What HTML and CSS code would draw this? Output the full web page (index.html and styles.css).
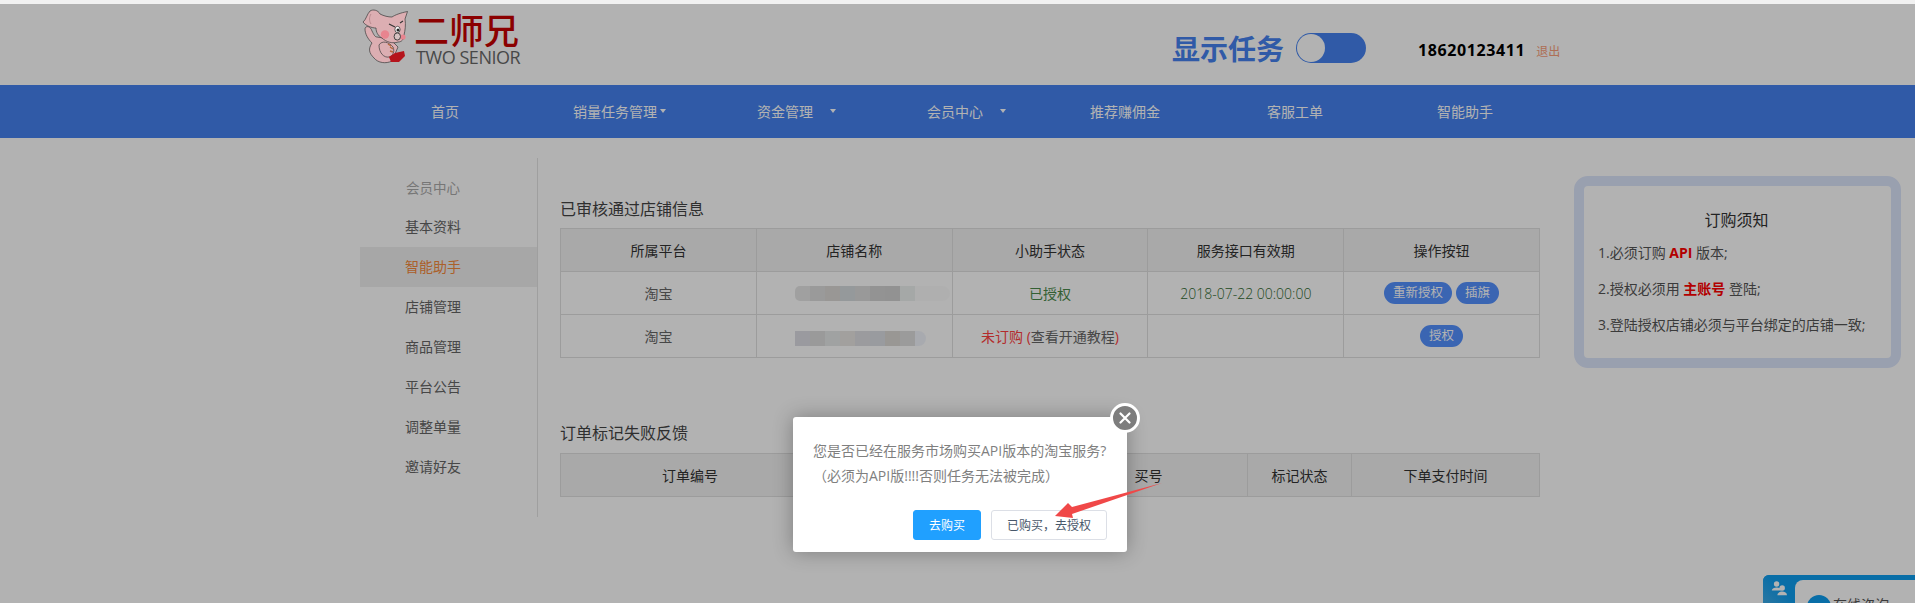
FILE: index.html
```html
<!DOCTYPE html>
<html lang="zh-CN">
<head>
  <meta charset="UTF-8">
  <title>二师兄 - 智能助手</title>
  <link rel="stylesheet" href="styles.css">
</head>
<body>
  <div class="top-strip"></div>
  <div class="page">
    <header class="header">
      <div class="logo">
        <svg class="logo-pig" viewBox="0 0 46 56" width="46" height="56">
          <!-- 身体 -->
          <path d="M3 20 C3 17 8 16 10 22 C12 26 13 28 15 28 L28 30 L36 38 L30 52 C24 55 16 54 12 49 C7 44 6 40 10 34 C6 30 3 25 3 20 Z" fill="#dcaeb2" stroke="#3a3a3a" stroke-width="0.7"/>
          <!-- 头和耳朵 -->
          <path d="M1 13 C4 11 5 5 8 2 C11 0 16 1 18 5 C22 7 26 8 30 8 C33 6 38 4 45.5 2.5 L43 10 C44 16 43 22 42 26 C42 30 40 33 36 33 C31 35 24 33 20 29 C16 27 14 23 14 19 C10 19 4 17 1 13 Z" fill="#dcaeb2" stroke="#3a3a3a" stroke-width="0.7"/>
          <path d="M9 5 C7 8 7 12 9 15" fill="none" stroke="#b98a8e" stroke-width="1"/>
          <circle cx="23" cy="25.5" r="4.2" fill="#e8848f"/>
          <circle cx="41" cy="28" r="2.6" fill="#e8848f"/>
          <path d="M27 15 L33 18 M38 14 L41 12" stroke="#333" stroke-width="1.1" fill="none"/>
          <ellipse cx="35.5" cy="20.5" rx="2.6" ry="3.2" fill="#fff" stroke="#222" stroke-width="0.7"/>
          <circle cx="36" cy="21" r="1.5" fill="#222"/>
          <ellipse cx="35.3" cy="27.5" rx="3.2" ry="3.6" fill="#d6c2c2" stroke="#333" stroke-width="0.9"/>
          <!-- 手和红包 -->
          <path d="M17 36 C20 31 27 33 31 38 C33 42 31 47 27 48 C22 49 17 44 17 36 Z" fill="#dcaeb2" stroke="#3a3a3a" stroke-width="0.7"/>
          <path d="M26 35 L29 37 M28 38 L31 40 M28 42 L31 43" stroke="#b5683c" stroke-width="1.4"/>
          <path d="M27 48 L33 44 L42 42 L43 47 L37 53 L29 53 Z" fill="#b5141c"/>
        </svg>
        <div class="logo-text">
          <div class="logo-cn">二师兄</div>
          <div class="logo-en">TWO SENIOR</div>
        </div>
      </div>
      <div class="header-right">
        <span class="task-label">显示任务</span>
        <div class="toggle"><span class="knob"></span></div>
        <span class="phone">18620123411</span>
        <a class="logout">退出</a>
      </div>
    </header>

    <nav class="nav">
      <a class="nav-item">首页</a>
      <a class="nav-item">销量任务管理<i class="caret"></i></a>
      <a class="nav-item">资金管理<i class="caret"></i></a>
      <a class="nav-item">会员中心<i class="caret"></i></a>
      <a class="nav-item">推荐赚佣金</a>
      <a class="nav-item">客服工单</a>
      <a class="nav-item">智能助手</a>
    </nav>

    <main class="content">
      <aside class="side">
        <div class="side-title">会员中心</div>
        <a class="side-item">基本资料</a>
        <a class="side-item active">智能助手</a>
        <a class="side-item">店铺管理</a>
        <a class="side-item">商品管理</a>
        <a class="side-item">平台公告</a>
        <a class="side-item">调整单量</a>
        <a class="side-item">邀请好友</a>
      </aside>

      <section class="main">
        <h3 class="block-title first">已审核通过店铺信息</h3>
        <table class="grid shops">
          <tr><th>所属平台</th><th>店铺名称</th><th>小助手状态</th><th>服务接口有效期</th><th>操作按钮</th></tr>
          <tr>
            <td>淘宝</td>
            <td><div class="blur blur-one"></div></td>
            <td class="green">已授权</td>
            <td class="green date">2018-07-22 00:00:00</td>
            <td><a class="pill">重新授权</a><a class="pill">插旗</a></td>
          </tr>
          <tr>
            <td>淘宝</td>
            <td><div class="blur blur-two"></div></td>
            <td><span class="red">未订购</span> <span class="red">(</span>查看开通教程<span class="red">)</span></td>
            <td></td>
            <td><a class="pill">授权</a></td>
          </tr>
        </table>

        <h3 class="block-title second">订单标记失败反馈</h3>
        <table class="grid orders">
          <colgroup><col class="c1"><col class="c2"><col class="c3"><col class="c4"><col class="c5"></colgroup>
          <tr><th>订单编号</th><th></th><th>买号</th><th>标记状态</th><th>下单支付时间</th></tr>
        </table>
      </section>

      <aside class="notice">
        <div class="notice-inner">
          <h4>订购须知</h4>
          <p>1.必须订购 <b>API</b> 版本;</p>
          <p>2.授权必须用 <b>主账号</b> 登陆;</p>
          <p>3.登陆授权店铺必须与平台绑定的店铺一致;</p>
        </div>
      </aside>
    </main>

    <div class="chat">
      <div class="chat-tab">
        <svg viewBox="0 0 20 20" width="16" height="16"><circle cx="7" cy="5" r="3.4" fill="#fff"/><path d="M1 13 C1 8 13 8 13 13 Z" fill="#fff"/><circle cx="14" cy="10" r="3.4" fill="#fff"/><path d="M8 19 C8 13 20 13 20 19 Z" fill="#fff"/></svg>
      </div>
      <div class="chat-body">
        <svg class="chat-bubble" viewBox="0 0 24 24" width="24" height="24"><circle cx="12" cy="12" r="12" fill="#0e9ef0"/><circle cx="8" cy="9" r="1" fill="#fff"/><circle cx="12" cy="9" r="1" fill="#fff"/><circle cx="16" cy="9" r="1" fill="#fff"/></svg>
        <span>在线咨询</span>
      </div>
    </div>
  </div>

  <div class="mask"></div>

  <div class="dialog">
    <a class="dialog-close">
      <svg viewBox="0 0 12 12" width="12" height="12"><path d="M1.5 1.5 L10.5 10.5 M10.5 1.5 L1.5 10.5" stroke="#fff" stroke-width="2.2" stroke-linecap="round"/></svg>
    </a>
    <div class="dialog-text">
      <div>您是否已经在服务市场购买API版本的淘宝服务?</div>
      <div>（必须为API版!!!!否则任务无法被完成）</div>
    </div>
    <div class="dialog-btns">
      <button class="btn btn-primary">去购买</button>
      <button class="btn">已购买，去授权</button>
    </div>
  </div>

  <!-- 截图上画的红色箭头 -->
  <svg class="arrow" viewBox="0 0 110 36" width="110" height="36">
    <polygon points="0,34 13,21 17,25 107,1 17,32 18,36" fill="#f04848"/>
  </svg>
</body>
</html>
```

FILE: styles.css
```css
* { box-sizing: border-box; }
html, body {
  margin: 0;
  padding: 0;
  height: 603px;
  overflow: hidden;
}
body {
  background: #fff;
  font-family: "Open Sans", "Noto Sans CJK SC", sans-serif;
  font-size: 14px;
  color: #555;
  position: relative;
}
.top-strip { height: 4px; background: #f1f1f1; }
.page { height: 599px; position: relative; overflow: hidden; }
.mask {
  position: absolute;
  top: 4px; left: 0; right: 0; bottom: 0;
  background: rgba(0,0,0,0.3);
  z-index: 1;
}

/* 头部 */
.header {
  height: 81px;
  padding-left: 362px;
  display: flex;
  align-items: flex-start;
}
.logo { display: flex; width: 811px; padding-top: 5px; }
.logo-pig { display: block; flex: none; position: relative; z-index: 2; }
.logo-text { margin-left: 8px; position: relative; z-index: 2; }
.logo-cn {
  font-size: 35px;
  line-height: 36px;
  margin-top: 2px;
  margin-left: -2px;
  font-weight: 500;
  color: #8b0000;
  white-space: nowrap;
  font-family: "Noto Sans CJK SC", sans-serif;
}
.logo-en {
  font-size: 18px;
  line-height: 20px;
  color: #484848;
  white-space: nowrap;
  letter-spacing: -0.45px;
}
.header-right { display: flex; align-items: center; padding-top: 29px; }
.task-label {
  font-size: 28px;
  line-height: 30px;
  font-weight: 700;
  color: #4582f0;
  margin-left: -1px;
  font-family: "Noto Sans CJK SC", sans-serif;
}
.toggle {
  width: 70px;
  height: 30px;
  margin-left: 12px;
  border-radius: 15px;
  background: #4582f0;
  padding: 1px;
}
.knob {
  display: block;
  width: 28px;
  height: 28px;
  border-radius: 50%;
  background: #fff;
}
.phone {
  margin-left: 52px;
  font-size: 16px;
  font-weight: 700;
  color: #000;
  letter-spacing: 0.6px;
  padding-top: 4px;
}
.logout { margin-left: 11px; font-size: 12px; color: #f9a07a; padding-top: 6px; }

/* 导航 */
.nav {
  height: 53px;
  background: #4582f0;
  padding-left: 360px;
  display: flex;
}
.nav-item {
  width: 170px;
  text-align: center;
  line-height: 53px;
  color: #fff;
  font-size: 14px;
  position: relative;
}
.caret {
  position: absolute;
  right: 34px;
  top: 24px;
  border: 3px solid transparent;
  border-top: 4px solid #fff;
  border-bottom: 0;
}

/* 主体 */
.content {
  padding-left: 360px;
  display: flex;
  align-items: flex-start;
}
.side {
  width: 178px;
  height: 359px;
  margin-top: 20px;
  padding-top: 10px;
  border-right: 1px solid #e4e4e4;
}
.side-title {
  height: 39px;
  padding-left: 46px;
  line-height: 40px;
  color: #aaa;
  font-size: 13.5px;
}
.side-item {
  display: block;
  height: 40px;
  line-height: 40px;
  padding-left: 45px;
  color: #666;
}
.side-item.active { background: #f0f0f0; color: #f58a3c; }

.main { width: 980px; margin-left: 22px; }
.block-title {
  margin: 0;
  font-size: 16px;
  font-weight: 400;
  color: #444;
  line-height: 24px;
}
.block-title.first { margin-top: 59px; margin-bottom: 7px; }
.block-title.second { margin-top: 63px; margin-bottom: 8px; }
.grid {
  width: 100%;
  table-layout: fixed;
  border-collapse: collapse;
  border: 1px solid #e0e0e0;
}
.grid th, .grid td {
  height: 43px;
  border: 1px solid #e0e0e0;
  text-align: center;
  padding: 0;
  font-size: 14px;
  font-weight: 400;
}
.grid th { background: #f2f2f2; color: #333; }
.grid td { color: #666; }
.orders .c1 { width: 259px; }
.orders .c2 { width: 230px; }
.orders .c3 { width: 198px; }
.orders .c4 { width: 104px; }
.green { color: #4a8a4a !important; }
.date { font-weight: 300 !important; color: #2f6a2f !important; }
.red { color: #ff4040; }
.pill {
  display: inline-block;
  height: 22px;
  line-height: 22px;
  padding: 0 9px;
  margin: 0 2px;
  border-radius: 11px;
  background: #5391ff;
  color: #fff;
  font-size: 12.5px;
}
/* 打码的店铺名 */
.blur { height: 15px; margin-left: 38px; }
.blur-one {
  width: 155px;
  border-radius: 8px 12px 12px 8px;
  background: linear-gradient(90deg,
    #e5e5e5 0 15px, #dddddd 15px 30px, #dcd9d6 30px 45px, #d6dcdf 45px 60px,
    #dbdbdb 60px 75px, #d3d3d3 75px 90px, #d2d2d2 90px 105px, #edf1f0 105px 120px,
    #fbfbfb 120px);
}
.blur-two {
  width: 131px;
  margin-top: 4px;
  border-radius: 0 8px 8px 0;
  background: linear-gradient(90deg,
    #dddde4 0 15px, #dddddd 15px 30px, #e6e9e9 30px 45px, #e9e5e2 45px 60px,
    #dfdfe3 60px 75px, #dcdfe4 75px 90px, #dbd8d4 90px 105px, #dfdfdf 105px 120px,
    #f1f4fb 120px);
}

/* 右侧须知 */
.notice {
  width: 327px;
  height: 192px;
  margin-left: 34px;
  margin-top: 38px;
  border: 10px solid #dce5fb;
  border-radius: 14px;
}
.notice-inner { padding: 22px 16px 0 14px; }
.notice h4 {
  margin: 0 0 10px;
  font-size: 16px;
  font-weight: 400;
  line-height: 24px;
  text-align: center;
  color: #333;
}
.notice p {
  margin: 0 0 15px;
  line-height: 21px;
  color: #555;
  white-space: nowrap;
}
.notice b { color: #f00; }

/* 在线咨询 */
.chat {
  position: absolute;
  left: 1763px;
  top: 571px;
  width: 160px;
  height: 60px;
  display: flex;
  background: #0e9ef0;
  border-radius: 6px 0 0 0;
}
.chat-tab {
  width: 32px;
  flex: none;
  padding: 5px 0 0 8px;
  border-radius: 6px 0 0 0;
  background: linear-gradient(45deg, #6bb8e0, #0e9ef0 70%);
}
.chat-body {
  flex: 1;
  margin-top: 5px;
  background: #fff;
  border-radius: 8px 0 0 0;
  display: flex;
  align-items: flex-start;
  padding: 15px 0 0 12px;
  color: #555;
  font-size: 14px;
  line-height: 20px;
  white-space: nowrap;
}
.chat-bubble { flex: none; margin-right: 2px; }

/* 弹窗 */
.dialog {
  position: absolute;
  left: 793px;
  top: 417px;
  width: 334px;
  height: 135px;
  background: #fff;
  border-radius: 3px;
  box-shadow: 0 0 20px rgba(0,0,0,0.3);
  padding: 21px 20px 0;
  z-index: 3;
}
.dialog-close {
  position: absolute;
  right: -13px;
  top: -14px;
  width: 30px;
  height: 30px;
  border: 3px solid #fff;
  border-radius: 50%;
  background: #7d7d7d;
  display: flex;
  align-items: center;
  justify-content: center;
}
.dialog-text { color: #7f7f7f; font-size: 14px; line-height: 25px; white-space: nowrap; }
.dialog-btns {
  display: flex;
  justify-content: flex-end;
  gap: 10px;
  margin-top: 22px;
}
.btn {
  height: 30px;
  padding: 0 15px;
  font-family: inherit;
  font-size: 12px;
  color: #48576a;
  background: #fff;
  border: 1px solid #dcdfe6;
  border-radius: 3px;
}
.btn-primary { background: #20a0ff; border-color: #20a0ff; color: #fff; }
.arrow { position: absolute; left: 1055px; top: 482px; z-index: 3; }
```
